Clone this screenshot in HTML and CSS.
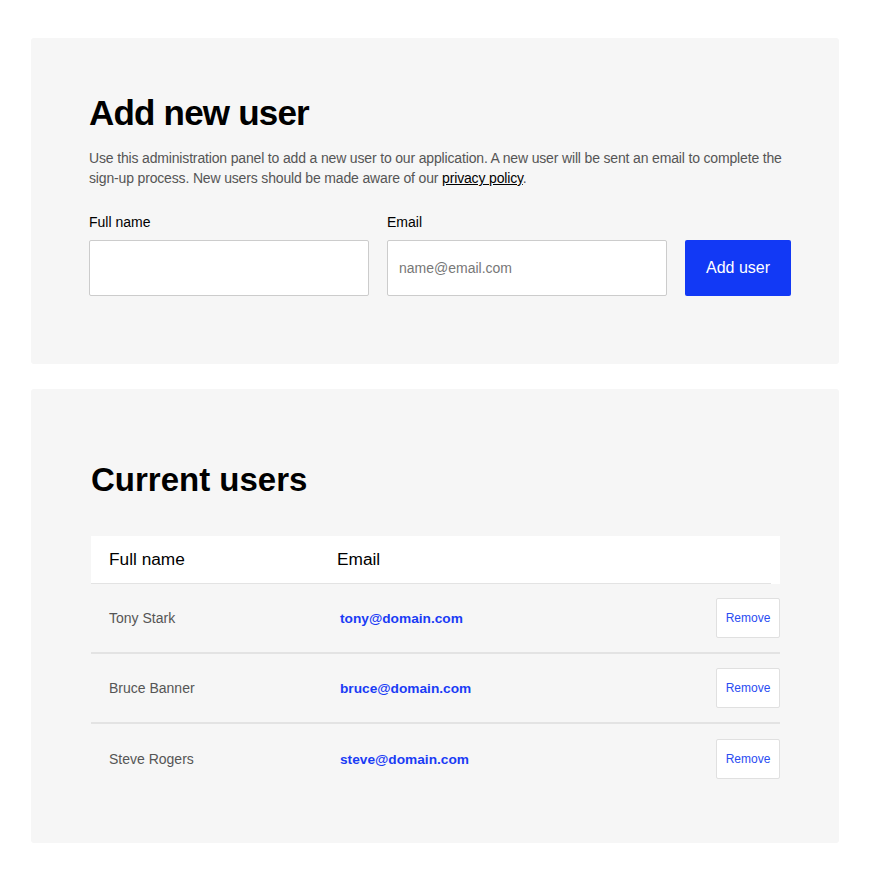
FILE: index.html
```html
<!DOCTYPE html>
<html lang="en">
<head>
<meta charset="utf-8">
<title>Users admin</title>
<link rel="stylesheet" href="styles.css">
</head>
<body>
<main class="page">
  <section class="card card-add">
    <h1 class="title-add">Add new user</h1>
    <p class="intro">Use this administration panel to add a new user to our application. A new user will be sent an email to complete the sign-up process. New users should be made aware of our <a href="#" class="policy">privacy policy</a>.</p>
    <form class="form-row">
      <label class="field">
        <span class="label">Full name</span>
        <input class="input" type="text">
      </label>
      <label class="field">
        <span class="label">Email</span>
        <input class="input" type="email" placeholder="name@email.com">
      </label>
      <button type="button" class="btn-add">Add user</button>
    </form>
  </section>

  <section class="card card-list">
    <h2 class="title-list">Current users</h2>
    <div class="table">
      <div class="thead">
        <div class="thead-inner">
          <span class="th th-name">Full name</span>
          <span class="th th-email">Email</span>
        </div>
      </div>
      <div class="row">
        <span class="cell-name">Tony Stark</span>
        <a href="#" class="cell-email">tony@domain.com</a>
        <button type="button" class="btn-remove">Remove</button>
      </div>
      <div class="row">
        <span class="cell-name">Bruce Banner</span>
        <a href="#" class="cell-email">bruce@domain.com</a>
        <button type="button" class="btn-remove">Remove</button>
      </div>
      <div class="row row-last">
        <span class="cell-name">Steve Rogers</span>
        <a href="#" class="cell-email">steve@domain.com</a>
        <button type="button" class="btn-remove">Remove</button>
      </div>
    </div>
  </section>
</main>
</body>
</html>
```

FILE: styles.css
```css
* { box-sizing: border-box; }

html, body {
  margin: 0;
  padding: 0;
  background: #ffffff;
}

body {
  font-family: "Liberation Sans", Arial, sans-serif;
  color: #000;
}

.page {
  padding: 38px 34px 36px 31px;
  display: flex;
  flex-direction: column;
  gap: 25px;
}

.card {
  background: #f6f6f6;
  border-radius: 3px;
}

.card-add {
  padding: 55px 30px 68px 58px;
  height: 326px;
}

.title-add {
  margin: 0 0 15px;
  font-size: 35px;
  line-height: 40px;
  font-weight: 700;
  letter-spacing: -0.8px;
}

.intro {
  margin: 0;
  font-size: 14px;
  line-height: 20px;
  color: #555555;
  letter-spacing: -0.16px;
  max-width: 710px;
}

.policy {
  color: #000;
  text-decoration: underline;
}

.form-row {
  margin-top: 25px;
  display: flex;
  align-items: flex-end;
  gap: 18px;
}

.field {
  display: flex;
  flex-direction: column;
  gap: 9px;
  width: 280px;
}

.label {
  font-size: 14px;
  line-height: 18px;
  color: #000;
}

.input {
  height: 56px;
  width: 100%;
  border: 1px solid #cccccc;
  border-radius: 2px;
  background: #fff;
  padding: 0 11px;
  font-family: "Liberation Sans", Arial, sans-serif;
  font-size: 14px;
  color: #000;
}

.input::placeholder {
  color: #777777;
}

.btn-add {
  width: 106px;
  height: 56px;
  border: 0;
  border-radius: 2px;
  background: #1239f5;
  color: #fff;
  font-family: "Liberation Sans", Arial, sans-serif;
  font-size: 16px;
  flex-shrink: 0;
}

.card-list {
  padding: 72px 59px 52px 60px;
  height: 454px;
}

.title-list {
  margin: 0 0 37px;
  font-size: 33px;
  line-height: 38px;
  font-weight: 700;
}

.table {
  width: 689px;
}

.thead {
  background: #fff;
  padding-right: 9px;
}

.thead-inner {
  display: grid;
  grid-template-columns: 228px 1fr;
  height: 48px;
  align-items: center;
  border-bottom: 1px solid #e3e3e3;
  padding-left: 18px;
}

.th {
  font-size: 17.3px;
  color: #000;
}

.row {
  display: grid;
  grid-template-columns: 228px 1fr 64px;
  align-items: center;
  height: 70px;
  padding: 14px 0 14px 18px;
  border-bottom: 2px solid #e3e3e3;
}

.row-last {
  border-bottom: 0;
}

.cell-name {
  font-size: 14px;
  color: #555555;
}

.cell-email {
  font-size: 13.7px;
  font-weight: 700;
  color: #1a3cf5;
  text-decoration: none;
  padding-left: 3px;
}

.btn-remove {
  width: 64px;
  height: 40px;
  background: #fff;
  border: 1px solid #e0e0e0;
  border-radius: 2px;
  color: #2a4cf2;
  font-family: "Liberation Sans", Arial, sans-serif;
  font-size: 12px;
  padding: 0;
}
```
